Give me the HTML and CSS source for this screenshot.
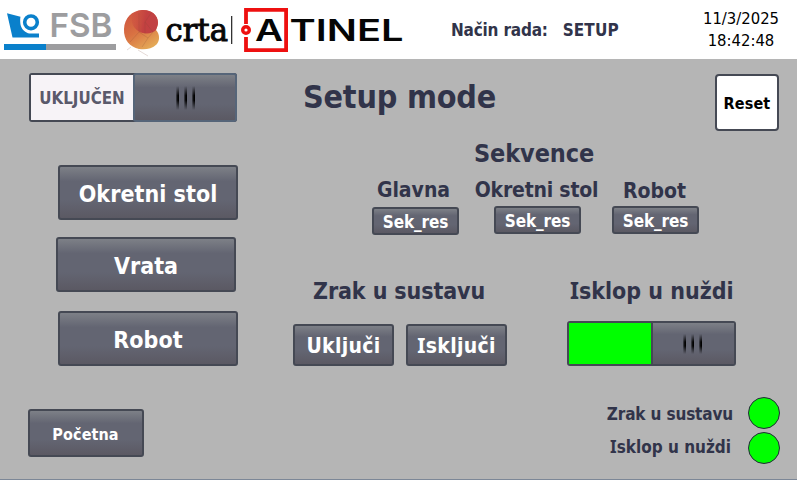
FILE: index.html
```html
<!DOCTYPE html>
<html lang="hr">
<head>
<meta charset="utf-8">
<title>Setup mode</title>
<link rel="stylesheet" href="styles.css">
</head>
<body>
<header class="header">
  <svg class="logos" width="410" height="59" viewBox="0 0 410 59">
    <defs>
      <linearGradient id="blob" x1="0.2" y1="0" x2="0.75" y2="1">
        <stop offset="0" stop-color="#cf5340"/>
        <stop offset="0.5" stop-color="#d97242"/>
        <stop offset="1" stop-color="#e5ad58"/>
      </linearGradient>
      <linearGradient id="lobe" x1="0" y1="0.4" x2="1" y2="0.6">
        <stop offset="0" stop-color="#c84540" stop-opacity="0.2"/>
        <stop offset="0.5" stop-color="#c34141"/>
        <stop offset="1" stop-color="#c14145"/>
      </linearGradient>
    </defs>
    <path fill="#0a80cb" d="M7 13.3 20.5 16.8C20 19 20 24 21.3 27C23 31 27 33.6 31 33.6H39V37.4H12.5Z"/>
    <circle cx="31" cy="22.3" r="6.3" fill="none" stroke="#0a80cb" stroke-width="3.6"/>
    <text class="fsb" x="49.500" y="37" textLength="63" lengthAdjust="spacingAndGlyphs">FSB</text>
    <rect x="4" y="44" width="42" height="6" fill="#0a80cb"/>
    <rect x="46" y="44" width="70" height="6" fill="#9d9d9f"/>
    <path fill="url(#blob)" d="M142 10C151 9.500 158 15 158 22.500C158 26 156.500 28 156 30C160 34 160 41 156.500 44.500C152 49 145 50 139 49C130 47 123.500 40 124 29C124.500 18 132 10.500 142 10Z"/>
    <path fill="url(#lobe)" d="M142 10C151 9.500 158 15 158 22.500C158 26 156.500 28 156 30C153 33 148 34 143 33C134 31 129 21 133 13.500C136 11 139 10.200 142 10Z"/>
    <g fill="none" stroke="#7c4434" stroke-width="0.5" opacity="0.4">
      <path d="M139 13V32L148 38L153 32L145 22L151 13M148 38L142 47M139 32L130 42"/>
      <path d="M127 50L131 47M138 50L148 56M145 22V34"/>
    </g>
    <text class="crta" x="165.500" y="41" textLength="62.500" lengthAdjust="spacingAndGlyphs">crta</text>
    <rect x="231" y="16" width="1.300" height="28" fill="#333"/>
    <path fill="none" stroke="#ee1010" stroke-width="3.800" d="M246 24V9.900H286.100V50.100H246V37"/>
    <circle cx="246" cy="30" r="3.300" fill="#fff" stroke="#ee1010" stroke-width="3.400"/>
    <text class="atinel" x="255" y="40.700" textLength="28" lengthAdjust="spacingAndGlyphs">A</text>
    <text class="atinel" x="289.500" y="40.700" textLength="114" lengthAdjust="spacingAndGlyphs">TINEL</text>
  </svg>
  <div class="mode"><span>Način rada:</span><span class="mode-value">SETUP</span></div>
  <div class="clock"><div>11/3/2025</div><div>18:42:48</div></div>
</header>
<main class="main">
  <section class="side">
    <div class="toggle toggle-mode"><div class="toggle-label">UKLJUČEN</div><div class="knob"><i></i><i></i><i></i></div></div>
    <nav class="menu">
      <button class="btn menu-btn">Okretni stol</button>
      <button class="btn menu-btn menu-vrata">Vrata</button>
      <button class="btn menu-btn menu-robot">Robot</button>
    </nav>
    <button class="btn home">Početna</button>
  </section>
  <section class="content">
    <div class="top">
      <h1>Setup mode</h1>
      <button class="reset">Reset</button>
    </div>
    <h2 class="seq-title">Sekvence</h2>
    <div class="sequences">
      <div class="seq seq-main"><h3>Glavna</h3><button class="btn small">Sek_res</button></div>
      <div class="seq seq-table"><h3>Okretni stol</h3><button class="btn small">Sek_res</button></div>
      <div class="seq seq-robot"><h3>Robot</h3><button class="btn small">Sek_res</button></div>
    </div>
    <div class="controls">
      <div class="air">
        <h2 class="air-title">Zrak u sustavu</h2>
        <div class="pair"><button class="btn medium">Uključi</button><button class="btn medium off"><span class="serif-i">I</span>sključi</button></div>
      </div>
      <div class="emergency">
        <h2 class="emergency-title"><span class="serif-i">I</span>sklop u nuždi</h2>
        <div class="toggle toggle-stop"><div class="toggle-on"></div><div class="knob"><i></i><i></i><i></i></div></div>
      </div>
    </div>
    <div class="status">
      <div class="status-row"><span class="status-air">Zrak u sustavu</span><b class="lamp"></b></div>
      <div class="status-row"><span class="status-stop"><span class="serif-i">I</span>sklop u nuždi</span><b class="lamp"></b></div>
    </div>
  </section>
</main>
</body>
</html>
```
FILE: styles.css
```css
* { box-sizing: border-box; margin: 0; }
body {
  width: 797px; height: 480px; overflow: hidden;
  display: flex; flex-direction: column;
  background: #b5b5b5; color: #31344a;
  font-family: "DejaVu Sans Condensed", "DejaVu Sans", sans-serif; font-weight: 700;
}
/* Capital I with crossbars; zero line-height keeps the line box unchanged */
.serif-i { font-family: "Noto Sans", sans-serif; line-height: 0; }
.header { height: 59px; flex: none; display: flex; background: #fff; }
.logos { display: block; flex: none; }
.fsb { font: 600 33px Inter, sans-serif; fill: #9d9d9f; }
.crta { font: 400 32px "DejaVu Serif", serif; fill: #080808; stroke: #080808; stroke-width: 1px; }
.atinel { font: 600 29.5px Inter, sans-serif; fill: #050505; }
.mode { width: 280px; padding: 1px 0 0 41px; display: flex; gap: 15px; font-size: 17px; line-height: 59px; white-space: nowrap; letter-spacing: -0.2px; }
.mode-value { letter-spacing: 0.1px; }
.clock { width: 102px; padding-top: 8px; text-align: center; color: #000; font-size: 16.5px; font-weight: 400; line-height: 22px; }

.main { height: 421px; display: flex; border-bottom: 1px solid #7c8797; }
.side { width: 270px; flex: none; padding: 14px 0 0 28px; display: flex; flex-direction: column; align-items: flex-start; }
.content { flex: 1; display: flex; flex-direction: column; min-width: 0; }

button { font-family: inherit; font-weight: 700; padding: 0; white-space: nowrap; }
.btn, .knob { background: linear-gradient(#7d8087 0%, #636572 28%, #636572 65%, #5b5963 100%); }
.btn { border: 2px solid #454954; border-radius: 3px; color: #fff; }

.toggle { display: flex; border: 2px solid #454954; border-radius: 3px; }
.toggle-mode { width: 208px; height: 49px; margin-left: 1px; }
.toggle-label { width: 102px; background: #f7f3f7; color: #5a596b; font-size: 16.8px; line-height: 47px; text-align: center; }
.knob { flex: 1; display: flex; justify-content: center; align-items: center; gap: 5px; }
.knob i { width: 3px; height: 24px; background: linear-gradient(90deg, rgba(0,0,0,.3), #000 60%); mask-image: linear-gradient(transparent, #000 40%, #000 60%, transparent); }
.toggle-mode .knob { margin: -2px -2px -2px 0; border: 2px solid #566579; border-radius: 3px; }
.toggle-stop { width: 169px; height: 45px; margin: 14px 0 0 0; }
.toggle-on { width: 82px; background: #0f0; }
.toggle-stop .knob { border-left: 2px solid #454954; padding-right: 2px; }
.toggle-stop .knob i { height: 20px; }

.menu { margin: 43px 0 0 28px; display: flex; flex-direction: column; }
.menu-btn { width: 180px; height: 55px; margin-left: 2px; padding-top: 2px; font-size: 23px; letter-spacing: 0.05px; }
.menu-vrata { margin: 17px 0 0 0; letter-spacing: 0; }
.menu-robot { margin-top: 19px; }
.home { width: 116px; height: 48px; margin-top: 43px; font-size: 16px; letter-spacing: 0.1px; padding: 2px 1px 0 0; }

.top { height: 72px; display: flex; justify-content: space-between; padding: 15px 18px 0 33px; }
h1 { font-size: 32px; line-height: 46px; letter-spacing: -0.2px; white-space: nowrap; }
.reset { width: 64px; height: 57px; flex: none; padding-top: 1px; border: 2px solid #454954; border-radius: 4px; background: #fff; color: #000; font-size: 16px; letter-spacing: 0.15px; }
h2, h3 { white-space: nowrap; }
.seq-title { margin: 6px 0 0 204px; font-size: 25px; line-height: 34px; letter-spacing: -0.1px; }
.sequences { height: 67px; padding: 5px 0 0 102px; display: flex; align-items: flex-start; }
.seq { display: flex; flex-direction: column; align-items: center; }
.seq-main { width: 87px; }
.seq-table { width: 123px; margin-left: 17px; }
.seq-robot { width: 87px; margin-left: 13px; }
h3 { font-size: 21px; line-height: 28px; }
.seq-table h3 { letter-spacing: -0.2px; margin-left: -2px; }
.seq-main h3 { margin-left: -4px; }
.seq-robot h3 { position: relative; top: 1px; left: -1px; }
.small { width: 87px; height: 28px; margin-top: 2px; padding-top: 1px; font-size: 17px; line-height: 22px; letter-spacing: -0.1px; }
.seq-main .small { margin-top: 3px; }
.controls { display: flex; height: 134px; padding: 37px 0 0 23px; }
.air { width: 274px; }
.air-title, .emergency-title { font-size: 23px; line-height: 32px; }
.air-title { margin-left: 20px; letter-spacing: -0.1px; }
.emergency-title { margin-left: 3px; }
.pair { display: flex; gap: 12px; margin-top: 17px; }
.medium { width: 101px; height: 42px; padding-top: 2px; font-size: 21px; letter-spacing: 0.3px; }
.status { display: flex; flex-direction: column; align-items: flex-end; gap: 3px; padding: 25px 17px 0 0; }
.status-row { display: flex; gap: 15px; font-size: 17px; line-height: 35px; height: 32px; letter-spacing: -0.15px; }
.status-stop { margin-right: 2px; line-height: 31px; letter-spacing: 0; }
.lamp { width: 32px; height: 32px; border: 1.5px solid #26283c; border-radius: 50%; background: #0f0; }
```
